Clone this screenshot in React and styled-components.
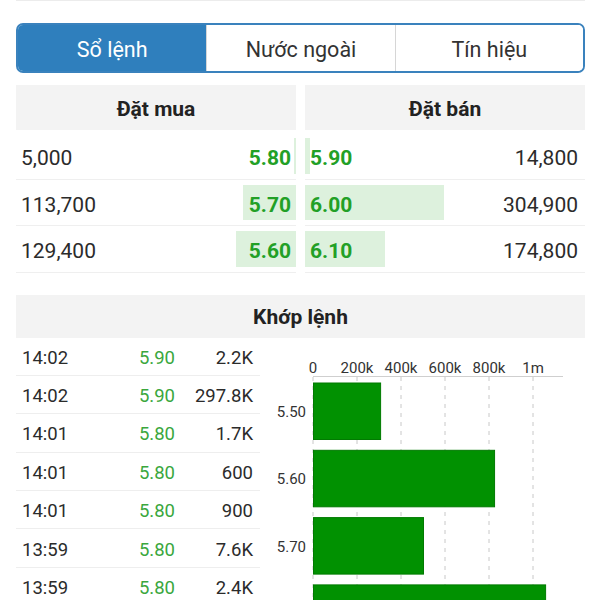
import React from 'react';
import styled, { createGlobalStyle } from 'styled-components';

const GlobalStyle = createGlobalStyle`
  html, body {
    margin: 0;
    padding: 0;
    background: #fff;
    font-family: Roboto, "Noto Sans", "Liberation Sans", sans-serif;
    color: #2b2b2b;
  }
`;

const Page = styled.div`
  width: 600px;
  height: 600px;
  overflow: hidden;
  padding: 0 15px 0 16px;
  box-sizing: border-box;
`;

const TopRule = styled.div`
  height: 1px;
  background: #ececec;
  margin-bottom: 22px;
`;

const Tabs = styled.div`
  display: grid;
  grid-template-columns: repeat(3, 1fr);
  height: 50px;
  border: 2px solid #3a82bd;
  border-radius: 7px;
  overflow: hidden;
  box-sizing: border-box;
`;

const Tab = styled.div`
  display: flex;
  align-items: center;
  justify-content: center;
  padding-top: 2px;
  font-size: 21.5px;
  background: ${p => (p.$active ? '#2f7fbd' : '#fff')};
  color: ${p => (p.$active ? '#fff' : '#333')};
  border-left: ${p => (p.$first ? 'none' : '1px solid #d6d6d6')};
`;

const Book = styled.div`
  display: grid;
  grid-template-columns: 1fr 1fr;
  column-gap: 9px;
  margin-top: 12px;
`;

const Side = styled.div`
  display: flex;
  flex-direction: column;
`;

const SideHeader = styled.div`
  height: 45px;
  display: flex;
  align-items: center;
  justify-content: center;
  padding-top: 2px;
  box-sizing: border-box;
  background: #f3f3f3;
  font-weight: 700;
  font-size: 21px;
  color: #222;
  margin-bottom: 3px;
`;

const BookRow = styled.div`
  position: relative;
  height: 46.5px;
  display: flex;
  align-items: center;
  justify-content: space-between;
  flex-direction: ${p => (p.$sell ? 'row-reverse' : 'row')};
  padding: ${p => (p.$sell ? '5px 7px 0 5px' : '5px 5px 0 5px')};
  border-bottom: 1px solid #efefef;
  box-sizing: border-box;
  font-size: 21px;
`;

const DepthBar = styled.div`
  position: absolute;
  top: 5px;
  bottom: 5px;
  ${p => (p.$sell ? 'left: 0;' : 'right: 0;')}
  background: #ddf1dd;
`;

const Volume = styled.span`
  position: relative;
  color: #2b2b2b;
`;

const BookPrice = styled.span`
  position: relative;
  font-weight: 700;
  color: #22a026;
`;

const MatchHeader = styled.div`
  height: 43px;
  margin-top: 22px;
  display: flex;
  align-items: center;
  justify-content: center;
  padding-top: 1px;
  box-sizing: border-box;
  background: #f3f3f3;
  font-weight: 700;
  font-size: 21px;
  color: #222;
`;

const MatchBody = styled.div`
  display: flex;
  gap: 10px;
`;

const TradeList = styled.div`
  width: 244px;
  flex-shrink: 0;
`;

const TradeRow = styled.div`
  display: grid;
  grid-template-columns: 1fr 60px 78px;
  align-items: center;
  height: 38.4px;
  padding: 3px 7px 0 6px;
  border-bottom: 1px solid #eeeeee;
  box-sizing: border-box;
  font-size: 18.5px;
`;

const Time = styled.span`
  color: #2b2b2b;
`;

const TradePrice = styled.span`
  text-align: right;
  color: #3aa73d;
`;

const TradeVol = styled.span`
  text-align: right;
  color: #2b2b2b;
`;

const Chart = styled.svg`
  display: block;
  flex: 1;
  height: 262px;
`;

const bids = [
  { vol: '5,000', price: '5.80', w: 2 },
  { vol: '113,700', price: '5.70', w: 53 },
  { vol: '129,400', price: '5.60', w: 60 },
];

const asks = [
  { vol: '14,800', price: '5.90', w: 5 },
  { vol: '304,900', price: '6.00', w: 139 },
  { vol: '174,800', price: '6.10', w: 80 },
];

const trades = [
  ['14:02', '5.90', '2.2K'],
  ['14:02', '5.90', '297.8K'],
  ['14:01', '5.80', '1.7K'],
  ['14:01', '5.80', '600'],
  ['14:01', '5.80', '900'],
  ['13:59', '5.80', '7.6K'],
  ['13:59', '5.80', '2.4K'],
];

const volumes = [
  { label: '5.50', v: 305000 },
  { label: '5.60', v: 823000 },
  { label: '5.70', v: 500000 },
  { label: '5.80', v: 1055000 },
];

const ticks = ['0', '200k', '400k', '600k', '800k', '1m'];

const VolumeChart = () => {
  const x0 = 43;
  const step = 44;
  const scale = step / 200000;
  const h = 262;
  return (
    <Chart viewBox={`0 0 315 ${h}`}>
      {ticks.map((t, i) => (
        <g key={t}>
          <text
            x={x0 + i * step}
            y={35}
            textAnchor="middle"
            fontSize="15"
            fill="#333"
            fontFamily="Roboto, sans-serif"
          >
            {t}
          </text>
          <line
            x1={x0 + i * step}
            x2={x0 + i * step}
            y1={39}
            y2={h}
            stroke="#c8c8c8"
            strokeDasharray="4 5"
          />
        </g>
      ))}
      <line x1={x0} x2={293} y1={38.5} y2={38.5} stroke="#cfcfcf" />
      {volumes.map((d, i) => {
        const y = 45 + i * 67.3;
        return (
          <g key={d.label}>
            <rect
              x={x0 + 0.5}
              y={y}
              width={d.v * scale}
              height={56.5}
              fill="#019101"
              stroke="#017a01"
            />
            {y + 36 < h && (
              <text
                x={36}
                y={y + 34}
                textAnchor="end"
                fontSize="15"
                fill="#333"
                fontFamily="Roboto, sans-serif"
              >
                {d.label}
              </text>
            )}
          </g>
        );
      })}
    </Chart>
  );
};

const App = () => (
  <>
    <GlobalStyle />
    <Page>
      <TopRule />
      <Tabs>
        <Tab $active $first>Sổ lệnh</Tab>
        <Tab>Nước ngoài</Tab>
        <Tab>Tín hiệu</Tab>
      </Tabs>
      <Book>
        <Side>
          <SideHeader>Đặt mua</SideHeader>
          {bids.map(b => (
            <BookRow key={b.price}>
              <DepthBar style={{ width: b.w }} />
              <Volume>{b.vol}</Volume>
              <BookPrice>{b.price}</BookPrice>
            </BookRow>
          ))}
        </Side>
        <Side>
          <SideHeader>Đặt bán</SideHeader>
          {asks.map(a => (
            <BookRow key={a.price} $sell>
              <DepthBar $sell style={{ width: a.w }} />
              <Volume>{a.vol}</Volume>
              <BookPrice>{a.price}</BookPrice>
            </BookRow>
          ))}
        </Side>
      </Book>
      <MatchHeader>Khớp lệnh</MatchHeader>
      <MatchBody>
        <TradeList>
          {trades.map((t, i) => (
            <TradeRow key={i}>
              <Time>{t[0]}</Time>
              <TradePrice>{t[1]}</TradePrice>
              <TradeVol>{t[2]}</TradeVol>
            </TradeRow>
          ))}
        </TradeList>
        <VolumeChart />
      </MatchBody>
    </Page>
  </>
);

export default App;
